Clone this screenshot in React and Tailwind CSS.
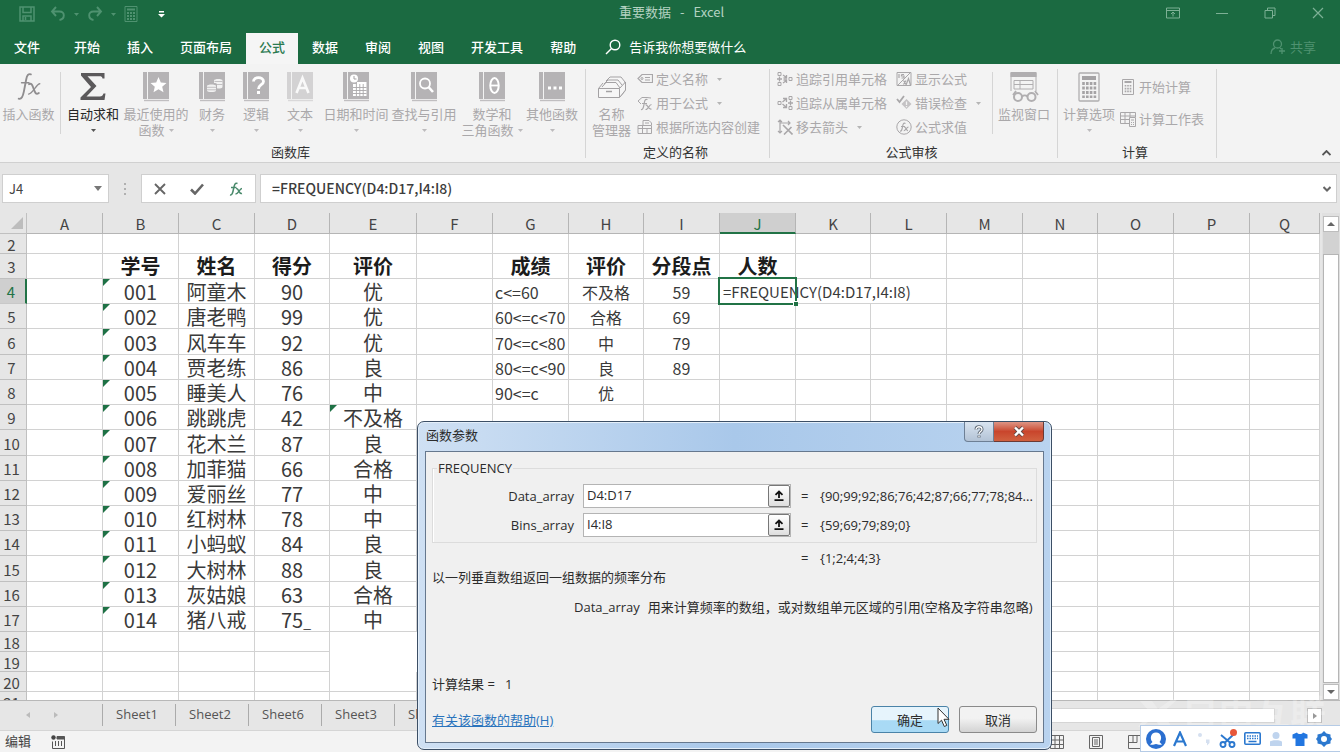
import React from "react";

const G = "#a9a7a9";

function Caret({ className = "fill-[#b5b5b5]" }) {
  return (
    <svg viewBox="0 0 5 3" className={`h-[3px] w-[5px] shrink-0 ${className}`} aria-hidden="true">
      <path d="M0 0H5L2.5 3Z" />
    </svg>
  );
}

function Book({ light, children }) {
  return (
    <svg viewBox="0 0 26 30" className={light ? "h-[30px] w-[26px] opacity-50" : "h-[30px] w-[26px]"} aria-hidden="true">
      <rect x="0" y="0" width="4" height="27" fill="#b5b3b5" />
      <rect x="5" y="0" width="21" height="27" fill="#b5b3b5" />
      <path d="M1 28.5H26" stroke="#c0bec0" strokeWidth="1.4" />
      {children}
    </svg>
  );
}

const bigIcons = {
  fx: (
    <svg viewBox="0 0 28 32" className="h-[30px] w-[28px]" fill="none" stroke="#8f8d8f" strokeLinecap="round" aria-hidden="true">
      <path d="M3 28.500C6 29.500 7.500 26 8.500 21L11 8C11.800 3.500 13.500 1.500 16 2.500" strokeWidth="2" />
      <path d="M6 11.500H14" strokeWidth="1.500" />
      <path d="M14 13C17 11.500 17.500 14 19 18C20.500 22.500 21.500 24.500 24.500 22.500" strokeWidth="2" />
      <path d="M25.500 12.500C22 12.500 18 23.500 13.500 23.500" strokeWidth="1.400" />
    </svg>
  ),
  sum: (
    <svg viewBox="0 0 26 30" className="h-[30px] w-[26px]" fill="#5b595b" aria-hidden="true">
      <path d="M1 1H24.500V6.500H22.500C22 4.500 21.500 4.200 19.500 4.200H7.500L16.500 14L6.500 24.500H19.800C22 24.500 22.800 23.500 23.500 21.500H25.500L24.500 28H.500V25.500L11 15L1 3.500Z" />
    </svg>
  ),
  star: (
    <Book>
      <path d="M15.500 5L17.800 10.400L23.500 10.900L19.200 14.700L20.500 20.300L15.500 17.300L10.500 20.300L11.800 14.700L7.500 10.900L13.200 10.400Z" fill="#fff" />
    </Book>
  ),
  money: (
    <Book>
      <g fill="#f1f1f1">
        <path d="M15 8.500C15 6.500 23.500 6.500 23.500 8.500V15C23.500 16.500 19 16.700 18 16.300V12C18 11.500 16.500 11 15 11Z" />
        <path d="M8 14C8 12 17 12 17 14V18.500C17 20.500 8 20.500 8 18.500Z" />
      </g>
      <path d="M15.500 9.500H23.500M18 12.500H23.500M8 15.300H17M8 17.800H17" stroke="#bdbbbd" strokeWidth=".9" />
    </Book>
  ),
  question: (
    <Book>
      <path d="M10.500 9.500C10.500 4.200 20.500 4.200 20.500 9.500C20.500 12.800 15.500 12.800 15.500 17" fill="none" stroke="#fff" strokeWidth="2.800" />
      <rect x="14" y="19" width="3" height="3" fill="#fff" />
    </Book>
  ),
  letter: (
    <Book light>
      <path d="M9.500 21L15.500 6L21.500 21M11.500 16H19.500" fill="none" stroke="#fff" strokeWidth="2.600" />
    </Book>
  ),
  date: (
    <Book>
      <circle cx="11" cy="6.500" r="4" fill="#fff" />
      <path d="M11 4v3h2.500" stroke="#a5a3a5" fill="none" />
      <rect x="10" y="12" width="13.500" height="12" fill="#fff" />
      <path d="M10 15.500H23.500M10 18.500H23.500M10 21.500H23.500M13.400 12V24M16.800 12V24M20.200 12V24" stroke="#aaa8aa" strokeWidth=".9" />
      <rect x="14" y="10" width="9.500" height="2" fill="#fff" />
    </Book>
  ),
  lookup: (
    <Book>
      <circle cx="14" cy="11.500" r="5" fill="none" stroke="#fff" strokeWidth="1.800" />
      <path d="M17.500 15L22 20" stroke="#fff" strokeWidth="2.600" />
    </Book>
  ),
  theta: (
    <Book>
      <ellipse cx="15.500" cy="13.500" rx="4.200" ry="7.500" fill="none" stroke="#fff" strokeWidth="2" />
      <path d="M11.500 13.500H19.500" stroke="#fff" strokeWidth="1.800" />
    </Book>
  ),
  dots: (
    <Book>
      <path d="M9 14.500h3v3h-3zM14.500 14.500h3v3h-3zM20 14.500h3v3h-3z" fill="#fff" />
    </Book>
  ),
  names: (
    <svg viewBox="0 0 30 30" className="h-[30px] w-[30px]" fill="#f6f6f6" stroke="#a3a1a3" aria-hidden="true">
      <path d="M9 9L13 5H24L28 10V19L23 25" />
      <path d="M7 12L11 8H21L25 13M5 15L9 10.500H19L23 16" />
      <path d="M1.500 16.500H22.500V25.500H1.500ZM1.500 16.500L6 11M22.500 16.500L28.500 10V18L22.500 25.500" />
      <path d="M9 19.500H15" strokeWidth="1.500" />
    </svg>
  ),
  watch: (
    <svg viewBox="0 0 30 32" className="h-[32px] w-[30px]" fill="none" stroke="#b0aeb0" aria-hidden="true">
      <path d="M2 20V2H27V20" />
      <rect x="1.500" y="1" width="26" height="5" fill="#b0aeb0" stroke="none" />
      <path d="M5 9.500H24V18H5ZM5 13.500H24M11 9.500V18" />
      <path d="M4 24L7 20M29 24L26 20" strokeWidth="1.800" />
      <circle cx="9" cy="26" r="4" strokeWidth="2" />
      <circle cx="22.500" cy="26" r="4" strokeWidth="2" />
      <path d="M13 25.500C14.500 24 17 24 18.500 25.500" strokeWidth="2" />
    </svg>
  ),
  calc: (
    <svg viewBox="0 0 22 30" className="h-[30px] w-[22px]" fill="none" aria-hidden="true">
      <rect x="1" y="1" width="20" height="28" rx="1" stroke="#b0aeb0" strokeWidth="1.300" />
      <rect x="4" y="4" width="14" height="4" fill="#a5a3a5" />
      <path d="M5.500 10V26M9.300 10V26M13.100 10V26M16.900 10V26" stroke="#a5a3a5" strokeWidth="2.600" strokeDasharray="3 1.500" />
    </svg>
  ),
};

const sm = { viewBox: "0 0 16 16", className: "h-4 w-4 shrink-0", fill: "none", stroke: G, "aria-hidden": true };

const smallIcons = {
  tag: (
    <svg {...sm}>
      <path d="M5 3.500H15.500V11.500H5L1 7.500Z" strokeWidth="1.200" />
      <circle cx="5" cy="7.500" r="1" />
      <path d="M8 6.500H13M8 9H13" />
    </svg>
  ),
  useFx: (
    <svg {...sm}>
      <path d="M10 2.500H5L1 6L4 9M10 2.500L14 3" />
      <path d="M4 14.500C6 15 6.500 12 7 9.500C7.500 6 8 3.500 10.500 4.500M5 8.500H10M8.500 10C11 9 11 15 14.500 14M14.500 9.500C12 9.500 11 15 8.500 14.500" strokeWidth="1.200" />
    </svg>
  ),
  create: (
    <svg {...sm}>
      <path d="M1 6.500H14.500V14.500H1ZM1 9.500H14.500M5.500 6.500V14.500M6 6V1.500H12L14.500 4V6M8 4H12M10 9.500V14.500" />
    </svg>
  ),
  precedents: (
    <svg {...sm}>
      <path d="M1 1.500H4V4.500H1ZM1 11.500H4V14.500H1ZM12 6.500H15V9.500H12Z" />
      <path d="M0 8H5M2.500 5.500V10.500M6 4L9.500 6.500M6 12L9.500 9.500M9.500 4V7H6.500M9.500 12V9H6.500" strokeWidth="1.300" />
    </svg>
  ),
  dependents: (
    <svg {...sm}>
      <path d="M1 6.500H4V9.500H1ZM12 1.500H15V4.500H12ZM12 11.500H15V14.500H12Z" />
      <path d="M11 8H16M13.500 5.500V10.500M5.500 7L9 4M5.500 9L9 12M6 3.500H9.500V7M6 12.500H9.500V9" strokeWidth="1.300" />
    </svg>
  ),
  remove: (
    <svg {...sm}>
      <path d="M3 1V14M1 3L3 1L5 3M3 4H13M11 2L13 4L11 6M1 12L3 14L5 12" strokeWidth="1.200" />
      <path d="M6 6L15.500 15.500M14.500 8L7 15.500" strokeWidth="1.600" />
    </svg>
  ),
  show: (
    <svg {...sm}>
      <path d="M1 1.500H15V14.500H1ZM15 1L1 15" />
      <path d="M3 3V7M5.500 3.500H8M5.500 3.500V5H8V7H5.500M10 14L12.500 7.500L14.500 14M7.500 9.500L10 13.500M10 9.500L7.500 13.500" strokeWidth="1.200" />
    </svg>
  ),
  check: (
    <svg {...sm}>
      <path d="M1 4L3.500 7L8 1" strokeWidth="1.800" />
      <path d="M10.500 4L15.500 9L10.500 14L5.500 9Z" fill="#c4c2c4" stroke="none" />
      <path d="M10.500 6.500V10M10.500 11V12.300" stroke="#f3f3f3" strokeWidth="1.300" />
    </svg>
  ),
  evaluate: (
    <svg {...sm}>
      <circle cx="8" cy="8" r="7.200" />
      <path d="M4 12C5.500 12.500 6 10.500 6.500 8C7 5 7.500 3.500 9.500 4.500M5 7.500H9M8 8C10 7.500 10 12 12 11.500M12.500 8C10.500 8 9.500 12 7.800 11.700" strokeWidth="1.200" />
    </svg>
  ),
  calcNow: (
    <svg {...sm}>
      <path d="M2.500 .500H13.500V15.500H2.500Z" />
      <path d="M4.500 3H11.500" strokeWidth="2" />
      <path d="M5.500 6V14M8 6V14M10.500 6V14" strokeWidth="1.600" strokeDasharray="1.600 1.200" />
    </svg>
  ),
  calcSheet: (
    <svg {...sm}>
      <path d="M9 12.500H.500V1.500H15.500V6M.500 5H15.500M.500 8.500H9M5 1.500V12.500M10 1.500V6" />
      <path d="M9.500 6.500H15.500V15.500H9.500ZM11 9H14M11 11.500H12M13 11.500H14M11 13.500H12M13 13.500H14" />
    </svg>
  ),
};

function BigButton({ icon, lines, caret, width, active }) {
  const two = lines.length > 1;
  return (
    <button className={`flex shrink-0 flex-col items-center pt-[7px] text-[13px] leading-4 whitespace-nowrap ${width} ${active ? "text-[#262626]" : "text-[#aaa8aa]"}`}>
      <span className="mb-1 flex h-[31px] items-center">{bigIcons[icon]}</span>
      <span>{lines[0]}</span>
      <span className="flex h-4 items-center gap-1">
        {two && lines[1]}
        {caret && <Caret className={active ? "fill-[#555]" : "fill-[#bdbbbd]"} />}
      </span>
    </button>
  );
}

function SmallButton({ icon, label, caret }) {
  return (
    <button className="flex h-6 items-center gap-[3px] text-[13px] leading-4 whitespace-nowrap text-[#aaa8aa]">
      {smallIcons[icon]}
      <span>{label}</span>
      {caret && <span className="pl-[6px]"><Caret /></span>}
    </button>
  );
}

function Group({ label, width, children }) {
  return (
    <section className={`flex shrink-0 flex-col ${width}`}>
      <div className="flex h-20">{children}</div>
      <h2 className="pr-1 text-center text-[13px] leading-4 text-[#333]">{label}</h2>
    </section>
  );
}

const GroupLine = () => <div className="mt-[5px] mb-1 w-px shrink-0 bg-[#d5d5d5]" />;
const ItemLine = () => <div className="mt-2 h-[62px] w-px shrink-0 bg-[#d5d5d5]" />;

const tabs = ["开始", "插入", "页面布局", "公式", "数据", "审阅", "视图", "开发工具", "帮助"];

function TitleBar() {
  return (
    <div className="flex h-[33px] items-start text-[#4f9270]">
      <div className="flex h-7 flex-1 items-center pl-[19px]">
        <button aria-label="保存">
          <svg viewBox="0 0 16 16" className="h-4 w-4" fill="none" stroke="currentColor" strokeWidth="1.500">
            <path d="M1 1H15V15H1ZM4 1V6.500H12V1M4 15V10H12V15M6.500 11V14" />
          </svg>
        </button>
        <button aria-label="撤消" className="ml-[15px] flex items-center gap-2">
          <svg viewBox="0 0 16 16" className="h-4 w-4" fill="none" stroke="currentColor" strokeWidth="1.900">
            <path d="M6 1L2 5.500L6 10M2 5.500H9.500C15.500 5.500 15 13 9.500 14" />
          </svg>
          <Caret className="fill-[#4f9270]" />
        </button>
        <button aria-label="恢复" className="ml-2 flex items-center gap-2">
          <svg viewBox="0 0 16 16" className="h-4 w-4" fill="none" stroke="currentColor" strokeWidth="1.900">
            <path d="M10 1L14 5.500L10 10M14 5.500H6.500C.500 5.500 1 13 6.500 14" />
          </svg>
          <Caret className="fill-[#4f9270]" />
        </button>
        <button aria-label="计算器" className="ml-2">
          <svg viewBox="0 0 14 16" className="h-4 w-[14px]" fill="none" stroke="currentColor">
            <path d="M1 .500H13V15.500H1Z" />
            <path d="M3 3.500H11" strokeWidth="2" />
            <path d="M4 6V14M7 6V14M10 6V14" strokeWidth="2" strokeDasharray="2 1" />
          </svg>
        </button>
        <button aria-label="自定义快速访问工具栏" className="ml-5">
          <svg viewBox="0 0 7 7" className="h-[7px] w-[7px] fill-white">
            <path d="M1 0H6V1.500H1ZM0 3H7L3.500 6.500Z" />
          </svg>
        </button>
      </div>
      <h1 className="flex gap-[9px] pt-[3px] text-[13px] leading-[18px] text-[#b4d2c1]">
        <span>重要数据</span>
        <span>-</span>
        <span>Excel</span>
      </h1>
      <div className="flex h-[26px] flex-1 items-center justify-end gap-9 pr-4">
        <button aria-label="功能区显示选项">
          <svg viewBox="0 0 14 12" className="h-3 w-[14px]" fill="none" stroke="#7db095">
            <path d="M.500 1H13.500V11H.500ZM.500 3.500H13.500M7 9.500V5.500M5 7L7 5L9 7" />
          </svg>
        </button>
        <button aria-label="最小化">
          <svg viewBox="0 0 12 12" className="h-3 w-3" stroke="#7db095"><path d="M0 6.500H12" /></svg>
        </button>
        <button aria-label="还原">
          <svg viewBox="0 0 12 12" className="h-3 w-3" fill="none" stroke="#7db095"><path d="M1 3.500H8.500V11H1ZM3.500 3.500V1H11V8.500H8.500" /></svg>
        </button>
        <button aria-label="关闭">
          <svg viewBox="0 0 12 12" className="h-3 w-3" stroke="#7db095" strokeWidth="1.200"><path d="M1 1L11 11M11 1L1 11" /></svg>
        </button>
      </div>
    </div>
  );
}

function TabBar() {
  return (
    <nav className="flex h-[31px] items-stretch gap-px text-[13px] text-white">
      <button className="mr-[6px] w-[54px] pb-[3px] font-medium">文件</button>
      {tabs.map((t) => (
        <button key={t} className={`px-[13px] pb-[3px] font-medium whitespace-nowrap ${t === "公式" ? "bg-[#f5f5f5] text-[#2a7a50]" : ""}`}>
          {t}
        </button>
      ))}
      <button className="ml-[15px] flex items-center gap-2 pb-[3px] whitespace-nowrap">
        <svg viewBox="0 0 16 16" className="h-4 w-4" fill="none" stroke="#fff" strokeWidth="1.400">
          <circle cx="10" cy="6" r="4.800" />
          <path d="M6.500 9.500L1 15" />
        </svg>
        告诉我你想要做什么
      </button>
      <button className="mr-6 ml-auto flex items-center gap-1 pb-[3px] text-[#4f9270]">
        <svg viewBox="0 0 16 16" className="h-4 w-4" fill="none" stroke="currentColor" strokeWidth="1.300">
          <circle cx="7.500" cy="5" r="4" />
          <path d="M1 15C1 11.500 3 9.500 5 9M10 9L11 10M12 9V15M9 12H15" />
        </svg>
        共享
      </button>
    </nav>
  );
}

function Ribbon() {
  return (
    <div className="flex h-[99px] shrink-0 border-b border-[#d0d0d0] bg-[#f3f3f3]">
      <Group label="函数库" width="w-[585px]">
        <BigButton icon="fx" lines={["插入函数"]} width="w-[57px]" />
        <div className="flex w-[7px] justify-center"><ItemLine /></div>
        <BigButton icon="sum" lines={["自动求和"]} caret active width="w-[58px]" />
        <BigButton icon="star" lines={["最近使用的", "函数"]} caret width="w-[68px]" />
        <BigButton icon="money" lines={["财务"]} caret width="w-11" />
        <BigButton icon="question" lines={["逻辑"]} caret width="w-11" />
        <BigButton icon="letter" lines={["文本"]} caret width="w-11" />
        <BigButton icon="date" lines={["日期和时间"]} caret width="w-[68px]" />
        <BigButton icon="lookup" lines={["查找与引用"]} caret width="w-[68px]" />
        <BigButton icon="theta" lines={["数学和", "三角函数"]} caret width="w-[68px]" />
        <BigButton icon="dots" lines={["其他函数"]} caret width="w-[52px]" />
      </Group>
      <GroupLine />
      <Group label="定义的名称" width="w-[183px]">
        <BigButton icon="names" lines={["名称", "管理器"]} width="w-[51px]" />
        <div className="flex flex-col pt-[3px]">
          <SmallButton icon="tag" label="定义名称" caret />
          <SmallButton icon="useFx" label="用于公式" caret />
          <SmallButton icon="create" label="根据所选内容创建" />
        </div>
      </Group>
      <GroupLine />
      <Group label="公式审核" width="w-[287px]">
        <div className="flex w-[126px] flex-col pt-[3px] pl-[7px]">
          <SmallButton icon="precedents" label="追踪引用单元格" />
          <SmallButton icon="dependents" label="追踪从属单元格" />
          <SmallButton icon="remove" label="移去箭头" caret />
        </div>
        <div className="flex w-[96px] flex-col pt-[3px]">
          <SmallButton icon="show" label="显示公式" />
          <SmallButton icon="check" label="错误检查" caret />
          <SmallButton icon="evaluate" label="公式求值" />
        </div>
        <ItemLine />
        <BigButton icon="watch" lines={["监视窗口"]} width="w-[62px]" />
      </Group>
      <GroupLine />
      <Group label="计算" width="w-[158px]">
        <BigButton icon="calc" lines={["计算选项"]} caret width="w-[62px]" />
        <div className="flex flex-col gap-2 pt-[11px]">
          <SmallButton icon="calcNow" label="开始计算" />
          <SmallButton icon="calcSheet" label="计算工作表" />
        </div>
      </Group>
      <GroupLine />
      <button aria-label="折叠功能区" className="mt-auto mr-[9px] mb-[6px] ml-auto">
        <svg viewBox="0 0 9 6" className="h-[6px] w-[9px]" fill="none" stroke="#555" strokeWidth="1.800"><path d="M.500 5L4.500 1L8.500 5" /></svg>
      </button>
    </div>
  );
}

function FormulaBar() {
  return (
    <div className="flex h-[50px] shrink-0 items-start bg-[#e6e6e6] pt-[11px] pr-[3px] pl-[2px]">
      <div className="flex h-[29px] w-[107px] items-center border border-[#cfcfcf] bg-white">
        <input aria-label="名称框" defaultValue="J4" className="w-0 flex-1 pl-[6px] text-[13px] text-[#444] outline-none" />
        <button aria-label="名称列表" className="pr-[6px]">
          <svg viewBox="0 0 8 5" className="h-[5px] w-2 fill-[#777]"><path d="M0 0H8L4 5Z" /></svg>
        </button>
      </div>
      <div className="flex h-[29px] w-8 flex-col items-center justify-center gap-[3px]">
        <i className="h-[2px] w-[2px] bg-[#b0b0b0]" />
        <i className="h-[2px] w-[2px] bg-[#b0b0b0]" />
        <i className="h-[2px] w-[2px] bg-[#b0b0b0]" />
      </div>
      <div className="flex h-[29px] w-[115px] items-center justify-around border border-[#cfcfcf] bg-white">
        <button aria-label="取消输入">
          <svg viewBox="0 0 12 12" className="h-3 w-3" stroke="#666" strokeWidth="1.900"><path d="M1 1L11 11M11 1L1 11" /></svg>
        </button>
        <button aria-label="输入">
          <svg viewBox="0 0 14 12" className="h-3 w-[14px]" fill="none" stroke="#666" strokeWidth="2.600"><path d="M1 6.500L5 10.500L13 1.500" /></svg>
        </button>
        <button aria-label="插入函数">
          <svg viewBox="0 0 14 14" className="h-[14px] w-[14px]" fill="none" stroke="#4a8a6c" strokeWidth="1.500">
            <path d="M1 13C3 13.500 3.800 11 4.500 7C5.200 3 6 .500 8.500 1.500M2 5.500H7.500M7 6.500C10 5.500 9.500 12.500 13 11.500M13 6.500C10.500 6.500 9.500 12 6.500 12" />
          </svg>
        </button>
      </div>
      <div className="ml-1 flex h-[29px] flex-1 items-center border border-[#cfcfcf] bg-white">
        <input
          aria-label="编辑栏"
          defaultValue="=FREQUENCY(D4:D17,I4:I8)"
          className="w-0 flex-1 pl-[11px] font-['Noto_Sans_CJK_SC',sans-serif] text-[14px] font-medium text-[#3c3c3c] outline-none"
        />
        <button aria-label="展开编辑栏" className="pr-[5px]">
          <svg viewBox="0 0 8 6" className="h-[6px] w-2" fill="none" stroke="#666" strokeWidth="2"><path d="M.500 1L4 4.500L7.500 1" /></svg>
        </button>
      </div>
    </div>
  );
}

const letters = "ABCDEFGHIJKLMNOPQ".split("");
const colWidths = [
  "w-[76px]", "w-[76px]", "w-[76px]", "w-[75px]", "w-[87px]", "w-[76px]", "w-[76px]", "w-[75px]", "w-[76px]",
  "w-[76px]", "w-[75px]", "w-[76px]", "w-[76px]", "w-[75px]", "w-[76px]", "w-[76px]", "",
];

const students = [
  ["001", "阿童木", "90", "优"],
  ["002", "唐老鸭", "99", "优"],
  ["003", "风车车", "92", "优"],
  ["004", "贾老练", "86", "良"],
  ["005", "睡美人", "76", "中"],
  ["006", "跳跳虎", "42", "不及格"],
  ["007", "花木兰", "87", "良"],
  ["008", "加菲猫", "66", "合格"],
  ["009", "爱丽丝", "77", "中"],
  ["010", "红树林", "78", "中"],
  ["011", "小蚂蚁", "84", "良"],
  ["012", "大树林", "88", "良"],
  ["013", "灰姑娘", "63", "合格"],
  ["014", "猪八戒", "75", "中"],
];
const bands = [
  ["c<=60", "不及格", "59"],
  ["60<=c<70", "合格", "69"],
  ["70<=c<80", "中", "79"],
  ["80<=c<90", "良", "89"],
  ["90<=c", "优", ""],
];
const headings = { B: "学号", C: "姓名", D: "得分", E: "评价", G: "成绩", H: "评价", I: "分段点", J: "人数" };

function cellText(row, col) {
  if (row === 3) return headings[col] || "";
  const s = students[row - 4];
  const i = "BCDE".indexOf(col);
  if (s && i >= 0) return s[i];
  const b = bands[row - 4];
  const j = "GHI".indexOf(col);
  if (b && j >= 0) return b[j];
  return "";
}

function rowHeight(row) {
  if (row === 2 || row >= 18) return "h-5";
  return [6, 10, 15].includes(row) ? "h-[26px]" : "h-[25px]";
}

function Cell({ row, col }) {
  const text = cellText(row, col);
  const large = row === 3 || "BCDE".includes(col);
  const flagged = row >= 4 && row <= 17 && (col === "B" || (col === "E" && row === 9));
  const erased = col === "E" && (row === 18 || row === 19);
  const editing = row === 4 && col === "J";
  return (
    <td
      className={[
        "relative p-0 whitespace-nowrap",
        erased ? "" : "border-r border-b border-[#d2d2d2]",
        large ? "text-[20px] leading-[22px]" : "text-[16px] leading-[22px]",
        row === 3 ? "font-bold text-[#1c1c1c]" : "text-[#3a3a3a]",
        col === "G" && row > 3 ? "overflow-hidden pl-[2px] text-left" : "text-center",
      ].join(" ")}
    >
      {flagged && (
        <svg viewBox="0 0 7 7" className="absolute top-0 left-0 h-[7px] w-[7px] fill-[#1e7145]" aria-hidden="true">
          <path d="M0 0H7L0 7Z" />
        </svg>
      )}
      {text && <div className={row === 3 ? "h-6 pt-px" : "h-6 pt-[2px]"}>{text}</div>}
      {row === 17 && col === "D" && <span className="absolute right-[18px] bottom-0 text-[14px] leading-[18px]" aria-hidden="true">_</span>}
      {editing && (
        <>
          <div className="absolute top-0 left-0 z-10 h-6 bg-white pt-px pl-[3px] text-[15px] leading-[23px]">=FREQUENCY(D4:D17,I4:I8)</div>
          <div className="absolute -inset-x-[2px] -top-[2px] -bottom-[2px] z-20 border-2 border-[#217346]">
            <i className="absolute -right-[3px] -bottom-[3px] h-[5px] w-[5px] border-t border-l border-white bg-[#217346]" />
          </div>
        </>
      )}
    </td>
  );
}

function Sheet() {
  const rows = Array.from({ length: 20 }, (_, i) => i + 2);
  return (
    <div className="min-w-0 flex-1 overflow-hidden">
      <table className="w-full table-fixed border-separate border-spacing-0 bg-white">
        <colgroup>
          <col className="w-[27px]" />
          {letters.map((l, i) => <col key={l} className={colWidths[i]} />)}
        </colgroup>
        <thead>
          <tr className="h-[21px]">
            <th className="border-r border-b border-[#c0c0c0] bg-[#e6e6e6] p-0">
              <svg viewBox="0 0 12 12" className="mr-[3px] ml-auto h-3 w-3 fill-[#bdbdbd]" aria-hidden="true"><path d="M12 0V12H0Z" /></svg>
            </th>
            {letters.map((l) => (
              <th
                key={l}
                scope="col"
                className={`border-r p-0 text-[15px] leading-[18px] font-normal ${l === "J" ? "border-b-2 border-r-[#b5b5b5] border-b-[#217346] bg-[#cfcfcf] text-[#217346]" : "border-b border-[#b5b5b5] bg-[#e6e6e6] text-[#444]"}`}
              >
                <div className="h-[18px] pt-px">{l}</div>
              </th>
            ))}
          </tr>
        </thead>
        <tbody>
          {rows.map((r) => (
            <tr key={r} className={rowHeight(r)}>
              <th
                scope="row"
                className={`border-b p-0 pr-[3px] text-[15px] leading-[18px] font-normal ${r === 4 ? "border-r-2 border-r-[#217346] border-b-[#c8c8c8] bg-[#cfcfcf] text-[#217346]" : "border-r border-[#c0c0c0] bg-[#e6e6e6] text-[#444]"}`}
              >
                <div className="h-[18px] pt-px">{r}</div>
              </th>
              {letters.map((c) => <Cell key={c} row={r} col={c} />)}
            </tr>
          ))}
        </tbody>
      </table>
    </div>
  );
}

function VScroll() {
  return (
    <div className="flex w-[18px] shrink-0 flex-col bg-[#e0e0e0] pt-[3px] pr-px pl-px">
      <button aria-label="向上滚动" className="flex h-4 items-center justify-center border border-[#bdbdbd] bg-white">
        <svg viewBox="0 0 8 4" className="h-1 w-2 fill-[#666]"><path d="M0 4H8L4 0Z" /></svg>
      </button>
      <div className="h-[22px] bg-[#d2d2d2]" />
      <div className="flex-1 border border-[#b5b5b5] bg-white" />
      <button aria-label="向下滚动" className="mt-px flex h-4 items-center justify-center border border-[#bdbdbd] bg-white">
        <svg viewBox="0 0 8 4" className="h-1 w-2 fill-[#666]"><path d="M0 0H8L4 4Z" /></svg>
      </button>
    </div>
  );
}

const UI_LATIN = "font-['Open_Sans','Noto_Sans_CJK_SC',sans-serif]";

function SheetTabs() {
  return (
    <div className={`relative flex h-[30px] shrink-0 items-start border-t border-[#b8b8b8] bg-[#e6e6e6] pt-[3px] text-[13px] text-[#555] ${UI_LATIN}`}>
      <div className="flex h-[22px] w-[102px] items-center gap-6 pl-[26px]">
        <button aria-label="上一张工作表"><svg viewBox="0 0 4 6" className="h-[6px] w-1 fill-[#bbb]"><path d="M4 0V6L0 3Z" /></svg></button>
        <button aria-label="下一张工作表"><svg viewBox="0 0 4 6" className="h-[6px] w-1 fill-[#bbb]"><path d="M0 0V6L4 3Z" /></svg></button>
      </div>
      {["Sheet1", "Sheet2", "Sheet6", "Sheet3", "Sheet4"].map((s) => (
        <button key={s} className="h-[22px] w-[73px] border-l border-[#ababab] pr-1 pb-px">{s}</button>
      ))}
      <div className="mt-1 mr-8 ml-auto h-[15px] w-[40%] border border-[#d5d5d5] bg-white" />
      <button aria-label="向右滚动" className="mt-1 mr-[18px] flex h-[15px] w-[15px] items-center justify-center border border-[#bdbdbd] bg-white">
        <svg viewBox="0 0 4 6" className="h-[6px] w-1 fill-[#777]"><path d="M0 0V6L4 3Z" /></svg>
      </button>
      <div className="absolute -top-[3px] right-[14px] flex items-center gap-1 text-[36px] leading-[29px] font-bold text-white/25" aria-hidden="true">
        <svg viewBox="0 0 40 28" className="h-7 w-10 fill-current"><path d="M2 2H14L20 10L34 0H40L24 14L34 28H22L16 18L4 28H0L12 13Z" /></svg>
        自由互联
      </div>
    </div>
  );
}

function StatusBar() {
  return (
    <div className="flex h-[22px] shrink-0 items-center border-t border-[#d5d5d5] bg-[#f3f3f3] pl-[5px] text-[13px] leading-5 text-[#444]">
      <span className="pb-px">编辑</span>
      <button aria-label="宏录制" className="ml-5">
        <svg viewBox="0 0 14 14" className="h-[14px] w-[14px]" fill="none" stroke="#555">
          <circle cx="2.500" cy="2.500" r="2.200" fill="#444" stroke="none" />
          <path d="M6 1.500H13.500V4H6Z" fill="#555" />
          <path d="M1.500 6.500V13.500H13.500V4M4.500 6V11M7.500 6V11M10.500 6V11" />
        </svg>
      </button>
      <div className="mr-[198px] ml-auto flex items-center gap-[25px]">
        <button aria-label="普通">
          <svg viewBox="0 0 14 14" className="h-[14px] w-[14px]" fill="none" stroke="#666"><path d="M.500 .500H13.500V13.500H.500ZM.500 5H13.500M.500 9.500H13.500M5 .500V13.500M9.500 .500V13.500" /></svg>
        </button>
        <button aria-label="页面布局">
          <svg viewBox="0 0 14 14" className="h-[14px] w-[14px]" fill="none" stroke="#666"><path d="M.500 .500H13.500V13.500H.500ZM3.500 2.500H10.500V11.500H3.500ZM5 5H9M5 7H9M5 9H9" /></svg>
        </button>
        <button aria-label="分页预览">
          <svg viewBox="0 0 14 14" className="h-[14px] w-[14px]" fill="none" stroke="#666"><path d="M.500 .500H13.500V13.500H.500ZM.500 7.500H9V.500M5 .500V7.500" /></svg>
        </button>
      </div>
    </div>
  );
}

function InputToolbar() {
  const blue = "#2b78cf";
  return (
    <div className="absolute right-0 bottom-0 z-30 grid h-[27px] w-[200px] grid-cols-8 place-items-center border border-r-0 border-[#b5cbe6] bg-white pr-1 pl-[3px]">
      <svg viewBox="0 0 20 20" className="h-5 w-5" aria-hidden="true">
        <circle cx="10" cy="10" r="10" fill="#2b6fd0" />
        <path d="M10 3.500C4.500 3.500 3.500 10 6.500 13L4 15.500C7 16.500 8 15 10 15C12 15 13 16.500 16 15.500L13.500 13C16.500 10 15.500 3.500 10 3.500Z" fill="#fff" />
      </svg>
      <svg viewBox="0 0 14 16" className="h-4 w-[14px]" fill="none" stroke={blue} strokeWidth="2.200" aria-hidden="true"><path d="M1 15L7 1.500L13 15M3.500 10.500H10.500" /></svg>
      <svg viewBox="0 0 16 16" className="h-4 w-4" fill="#d5e0f0" aria-hidden="true"><circle cx="4" cy="4" r="2" /><path d="M10 8.500H13.500V12L11 14.500V12H10Z" /></svg>
      <svg viewBox="0 0 18 20" className="h-5 w-[18px]" fill="none" stroke={blue} strokeWidth="1.900" aria-hidden="true">
        <circle cx="4" cy="15.500" r="2.500" /><circle cx="13" cy="15.500" r="2.500" />
        <path d="M5.500 14L15 5M11.500 14L2 6" />
        <circle cx="14.500" cy="3.500" r="3.500" fill="#e8573a" stroke="none" />
      </svg>
      <svg viewBox="0 0 17 13" className="h-[13px] w-[17px]" fill="none" stroke={blue} aria-hidden="true">
        <rect x=".8" y=".8" width="15.400" height="11.400" rx="1" strokeWidth="1.600" />
        <path d="M3 4H14M3 6.500H14" strokeWidth="1.500" strokeDasharray="1.500 1" /><path d="M4.500 9.500H12.500" strokeWidth="1.500" />
      </svg>
      <svg viewBox="0 0 16 16" className="h-4 w-4" fill="#bfd4ee" aria-hidden="true"><circle cx="8" cy="4.500" r="3.500" /><path d="M2 15V11C2 8.500 14 8.500 14 11V15Z" /></svg>
      <svg viewBox="0 0 16 16" className="h-4 w-4" fill="#2276e0" aria-hidden="true"><path d="M5 1.500C6 3.500 10 3.500 11 1.500L15.500 3.500V7.500L12.500 7.500V15H3.500V7.500L.500 7.500V3.500Z" /></svg>
      <svg viewBox="0 0 16 16" className="h-4 w-4" aria-hidden="true">
        <path d="M8 0L10.500 2.500L14.500 3.500V6L16 8L14.500 10V12.500L10.500 13.500L8 16L5.500 13.500L1.500 12.500V10L0 8L1.500 6V3.500L5.500 2.500Z" fill={blue} />
        <circle cx="8" cy="8" r="3" fill="#fff" />
      </svg>
    </div>
  );
}

function ArgRow({ id, label, value, result }) {
  return (
    <div className="flex h-[29px] items-center">
      <label htmlFor={id} className="w-[141px] pr-[9px] text-right">{label}</label>
      <div className="flex h-6 w-[208px] border border-[#b4b4b4] bg-white">
        <input id={id} defaultValue={value} className="w-0 flex-1 pb-[2px] pl-[3px] outline-none" />
        <button aria-label={`选择 ${label}`} className="flex h-[22px] w-[22px] items-center justify-center rounded-[2px] border border-[#777] bg-gradient-to-b from-white to-[#dedede]">
          <svg viewBox="0 0 10 11" className="h-[11px] w-[10px]" fill="none" stroke="#111" strokeWidth="1.800"><path d="M5 8V1.500M1.500 4.800L5 1.500L8.500 4.800M.500 10.200H9.500" /></svg>
        </button>
      </div>
      <span className="w-[29px] pl-[10px]">=</span>
      <output htmlFor={id} className="whitespace-nowrap">{result}</output>
    </div>
  );
}

function Dialog() {
  return (
    <div
      role="dialog"
      aria-label="函数参数"
      className={`absolute top-[421px] left-[417px] z-40 w-[635px] rounded-[7px] border border-[#3c4f66] bg-gradient-to-r from-[#cfe0f3] via-[#a9c8ea] to-[#b9d3ef] px-[7px] pb-[6px] text-[13px] leading-[18px] text-[#2c2c2c] shadow-[inset_0_0_0_1px_#e4effa] ${UI_LATIN}`}
    >
      <div className="flex h-[29px] items-start">
        <h2 className="flex-1 pt-1 pl-px">函数参数</h2>
        <button aria-label="帮助" className="flex h-5 w-[30px] items-center justify-center rounded-bl-[4px] border border-t-0 border-[#6d7f95] bg-gradient-to-b from-[#d9e4f0] to-[#b3c3d6]">
          <svg viewBox="0 0 10 13" className="h-[13px] w-[10px]" fill="none" aria-hidden="true">
            <path d="M2 4.500C2 .800 8 .800 8 4.500C8 6.500 5 6.500 5 9M5 10.500V12.500" stroke="#5b6672" strokeWidth="3" />
            <path d="M2 4.500C2 .800 8 .800 8 4.500C8 6.500 5 6.500 5 9M5 10.800V12.200" stroke="#fff" strokeWidth="1.300" />
          </svg>
        </button>
        <button aria-label="关闭" className="flex h-5 w-[50px] items-center justify-center rounded-br-[4px] border border-t-0 border-l-0 border-[#6b3a35] bg-gradient-to-b from-[#dd9484] via-[#c9452c] to-[#d0603f]">
          <svg viewBox="0 0 12 11" className="h-[11px] w-3" aria-hidden="true">
            <path d="M2 1.500L10 9.500M10 1.500L2 9.500" stroke="#5e4a48" strokeWidth="4" />
            <path d="M2 1.500L10 9.500M10 1.500L2 9.500" stroke="#fff" strokeWidth="2.400" />
          </svg>
        </button>
      </div>
      <div className="border border-[#66788e] bg-[#f0f0f0] px-[6px] pt-[7px] pb-[9px]">
        <fieldset className="h-[84px] border border-[#dcdcdc] px-px shadow-[inset_1px_0_0_#fff]">
          <legend className="ml-[3px] px-px">FREQUENCY</legend>
          <div className="flex flex-col pt-1 pl-2">
            <ArgRow id="data-array" label="Data_array" value="D4:D17" result="{90;99;92;86;76;42;87;66;77;78;84..." />
            <ArgRow id="bins-array" label="Bins_array" value="I4:I8" result="{59;69;79;89;0}" />
          </div>
        </fieldset>
        <div className="flex pt-[6px] pl-[369px]">
          <span className="w-[19px]">=</span>
          <output>{"{1;2;4;4;3}"}</output>
        </div>
        <p className="pt-px">以一列垂直数组返回一组数据的频率分布</p>
        <p className="flex gap-2 pt-[12px] pl-[142px] whitespace-nowrap">
          <span>Data_array</span>
          <span>用来计算频率的数组，或对数组单元区域的引用(空格及字符串忽略)</span>
        </p>
        <p className="pt-[59px] whitespace-pre">计算结果 =   1</p>
        <div className="flex items-center gap-[10px] pt-[13px]">
          <a href="#help" className="mr-auto text-[#2a74bd] underline">有关该函数的帮助(H)</a>
          <button className="h-[27px] w-[78px] rounded-[3px] border border-[#4a83a8] bg-gradient-to-b from-[#e6f4fc] from-50% to-[#a9daf5] to-55%">确定</button>
          <button className="h-[27px] w-[78px] rounded-[3px] border border-[#8a8a8a] bg-gradient-to-b from-[#f2f2f2] from-45% to-[#d3d3d3]">取消</button>
        </div>
      </div>
      <svg viewBox="0 0 13 21" className="pointer-events-none absolute top-[285px] left-[519px] h-[21px] w-[13px]" aria-hidden="true">
        <path d="M1 1V16.500L4.500 13.200L7.300 19.500L9.800 18.400L7 12.300H12Z" fill="#fff" stroke="#333" />
      </svg>
    </div>
  );
}

export default function App() {
  return (
    <main className="relative flex h-screen flex-col overflow-hidden bg-[#e6e6e6] font-['Noto_Sans_CJK_SC',sans-serif]">
      <header className="shrink-0 bg-[#1b6a41]">
        <TitleBar />
        <TabBar />
      </header>
      <Ribbon />
      <FormulaBar />
      <div className="flex min-h-0 flex-1">
        <Sheet />
        <div className="w-[2px] shrink-0 bg-[#e6e6e6]" />
        <VScroll />
      </div>
      <SheetTabs />
      <StatusBar />
      <InputToolbar />
      <Dialog />
    </main>
  );
}
